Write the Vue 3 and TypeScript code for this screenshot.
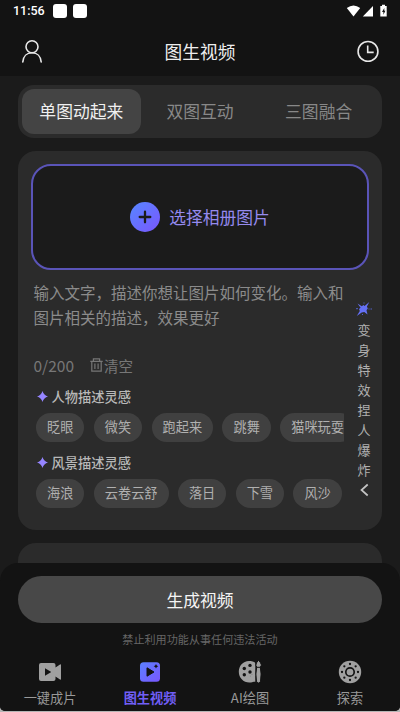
<script setup lang="ts">
import { ref } from 'vue'

const tabs: string[] = ['单图动起来', '双图互动', '三图融合']
const activeTab = ref(0)

interface Group {
  title: string
  chips: string[]
}

const groups: Group[] = [
  { title: '人物描述灵感', chips: ['眨眼', '微笑', '跑起来', '跳舞', '猫咪玩耍'] },
  { title: '风景描述灵感', chips: ['海浪', '云卷云舒', '落日', '下雪', '风沙'] },
]

const effects: string[] = [...'变身特效捏人爆炸']
const navItems: string[] = ['一键成片', '图生视频', 'AI绘图', '探索']
const activeNav = ref(1)

const ring = (count: number, radius: number) =>
  Array.from({ length: count }, (_, i) => {
    const a = (i * 2 * Math.PI) / count
    return { x: 12 + radius * Math.cos(a), y: 12 + radius * Math.sin(a) }
  })
const reelHoles = ring(8, 8)
</script>

<template>
  <div class="screen">
    <div class="status">
      <span class="time">11:56</span>
      <i class="square"></i>
      <i class="square"></i>
      <svg class="signals" width="42" height="14" viewBox="0 0 42 14" fill="#fff">
        <path d="M.8 4Q7.500-1 14.200 4L7.500 12.500Z" />
        <path d="M27 2v10.500H16.800Z" />
        <path fill-rule="evenodd" d="M34.300 2h1.700V.8h3V2h1.700v10.500h-6.400ZM38.300 4l-2.300 4h1.400v2.800l2-4H38.300Z" />
      </svg>
    </div>

    <header class="header">
      <svg width="24" height="26" viewBox="0 0 24 26" fill="none" stroke="#e8e8e8" stroke-width="1.600" stroke-linecap="round">
        <circle cx="12" cy="8.800" r="6" />
        <path d="M2.800 24C3.200 18.200 7 14.800 12 14.800s8.800 3.400 9.200 9.200" />
      </svg>
      <h1>图生视频</h1>
      <svg width="24" height="26" viewBox="0 0 24 26" fill="none" stroke="#e8e8e8" stroke-width="1.600">
        <circle cx="12" cy="13.400" r="9.900" />
        <path d="M11.700 7.600v6.800h6" />
      </svg>
    </header>

    <main class="content">
      <div class="tabs">
        <button v-for="(t, i) in tabs" :key="t" class="tab" :class="{ active: i === activeTab }" @click="activeTab = i">{{ t }}</button>
      </div>

      <section class="card">
        <div class="upload">
          <svg width="30" height="30" viewBox="0 0 30 30">
            <defs>
              <linearGradient id="plusFill" x1="0" y1="0" x2="1" y2="1">
                <stop offset="0" stop-color="#5687ff" />
                <stop offset="1" stop-color="#7a56ff" />
              </linearGradient>
            </defs>
            <circle cx="15" cy="15" r="15" fill="url(#plusFill)" />
            <path d="M15 9.700v10.600M9.700 15h10.600" stroke="#1b1b1b" stroke-width="2.300" stroke-linecap="round" />
          </svg>
          <span>选择相册图片</span>
        </div>

        <div class="body">
          <div class="main">
            <p class="prompt">输入文字，描述你想让图片如何变化。输入和图片相关的描述，效果更好</p>
            <div class="tools">
              <span class="count">0/200</span>
              <svg width="13" height="14" viewBox="0 0 13 14" fill="none" stroke="#777" stroke-width="1.200">
                <path d="M.3 3.300h12.400M3.400 3V.8h6.200V3M1.800 3.500v9.700h9.400V3.500M4.900 5.500v5.500M8.100 5.500v5.500" />
              </svg>
              <span class="clear">清空</span>
            </div>
            <div v-for="g in groups" :key="g.title" class="group">
              <div class="label">
                <svg width="11" height="11" viewBox="0 0 10 10" fill="#9585ff">
                  <path d="M5 0Q6.200 3.800 10 5 6.200 6.200 5 10 3.800 6.200 0 5 3.800 3.800 5 0Z" />
                </svg>
                <span>{{ g.title }}</span>
              </div>
              <div class="chips">
                <span v-for="c in g.chips" :key="c" class="chip">{{ c }}</span>
              </div>
            </div>
          </div>

          <aside class="side">
            <svg class="burst" width="16" height="14" viewBox="0 0 16 14">
              <path fill="#6470f5" d="M1.500 1.500 5.800 4.200 7.400 3l1.200 1L13.300 0 10.900 4.600l.9 1.800-1.300 1.800 1 4.300-3.200-2.600-2.600.5L.8 14l3-5.100L3 7l1.600-1.300Z" />
              <path d="M0 6.700h2M12.500 7h1M14.500 7H16M8 .5v1M6.500 12v1" stroke="#5361c8" />
            </svg>
            <span v-for="e in effects" :key="e">{{ e }}</span>
            <svg class="chevron" width="9" height="14" viewBox="0 0 9 14" fill="none" stroke="#c4c4c4" stroke-width="1.700">
              <path d="M7.700 1.500 1.500 7l6.200 5.500" />
            </svg>
          </aside>
        </div>
      </section>

      <section class="next-card"></section>
    </main>

    <footer class="footer">
      <button class="generate">生成视频</button>
      <p class="notice">禁止利用功能从事任何违法活动</p>
      <nav class="nav">
        <a v-for="(n, i) in navItems" :key="n" :class="{ active: i === activeNav }" @click="activeNav = i">
          <svg v-if="i === 0" width="24" height="24" viewBox="0 0 24 24" fill="#a0a0a0">
            <path fill-rule="evenodd" d="M3 3h12.500Q17.500 3 17.500 5v2.500L22 4.500q1-.5 1 .5v14q0 1-1 .5l-4.500-3V19q0 2-2 2H3Q1 21 1 19V5Q1 3 3 3ZM7 8.300v7.400l6.300-3.700Z" />
          </svg>
          <svg v-else-if="i === 1" width="24" height="24" viewBox="0 0 24 24">
            <defs>
              <linearGradient id="navFill" x1="0" y1="0" x2="1" y2="1">
                <stop offset="0" stop-color="#5b80ff" />
                <stop offset="1" stop-color="#7957ff" />
              </linearGradient>
            </defs>
            <rect x="2" y="2.300" width="20" height="19.500" rx="3.500" fill="url(#navFill)" />
            <path fill="#131313" stroke="#131313" stroke-linejoin="round" d="M9 7.800v8.400l7-4.200Z" />
            <path fill="#131313" d="M18 4q.5 1.800 2.300 2.300Q18.500 6.800 18 8.600 17.500 6.800 15.700 6.300 17.500 5.800 18 4Z" />
          </svg>
          <svg v-else-if="i === 2" width="24" height="24" viewBox="0 0 24 24">
            <path fill="#a0a0a0" d="M17 2.500C7.800-2.100.8 4.200.8 11.800c0 6.700 6 12.300 13.500 10.400 3-.8.8-3.200-1.300-5.100-1.200-1.200-.3-2.500 1.300-2.300l3 1V4Z" />
            <path fill="#a0a0a0" d="M12 14.500h5.300v7.300H13Z" />
            <g fill="#131313">
              <circle cx="12" cy="5.400" r="1.700" />
              <circle cx="6.300" cy="8.500" r="1.700" />
              <circle cx="6.300" cy="14.700" r="1.700" />
              <circle cx="12" cy="12" r="1.700" />
            </g>
            <path fill="#a0a0a0" stroke="#131313" stroke-width="1" d="M20.500.2q4.500 4.800 1.800 6.800l.8 7-.6 7.800q-2 2.500-4 0L17.900 14l.8-7Q16.500 4.500 20.500.2Z" />
            <path d="M18.500 7.300h4" stroke="#131313" />
          </svg>
          <svg v-else width="24" height="24" viewBox="0 0 24 24">
            <circle cx="12" cy="12" r="11.200" fill="#a0a0a0" />
            <circle cx="12" cy="12" r="4.200" fill="none" stroke="#131313" stroke-width="1.700" />
            <circle v-for="(h, k) in reelHoles" :key="k" :cx="h.x" :cy="h.y" r="1.150" fill="#131313" />
          </svg>
          <span>{{ n }}</span>
        </a>
      </nav>
    </footer>
  </div>
</template>

<style>
body {
  background: #b5b5b5;
}
</style>

<style scoped>
.screen {
  display: flex;
  flex-direction: column;
  box-sizing: border-box;
  width: 400px;
  height: 711px;
  overflow: hidden;
  border-radius: 0 0 5px 5px;
  background: #1b1b1b;
  color: #aaa;
  font-family: "Noto Sans CJK SC", sans-serif;
}
svg {
  display: block;
  flex: none;
}
button {
  border: 0;
  padding: 0;
  background: none;
  color: inherit;
  font-family: inherit;
}
p,
h1 {
  margin: 0;
}
.status {
  display: flex;
  flex: none;
  align-items: center;
  height: 22px;
  padding: 0 12px 0 13px;
  background: #131313;
}
.time {
  width: 40px;
  color: #fff;
  font: 500 12.500px/22px Roboto, sans-serif;
}
.square {
  width: 14px;
  height: 14px;
  margin-right: 5.500px;
  border-radius: 3px;
  background: #fff;
}
.signals {
  margin-left: auto;
}
.header {
  display: flex;
  flex: none;
  align-items: center;
  justify-content: space-between;
  height: 54px;
  box-sizing: border-box;
  padding: 4px 20px 0;
  background: #131313;
}
.header h1 {
  color: #eee;
  font-size: 17.700px;
  font-weight: 400;
  line-height: 26px;
}
.content {
  display: flex;
  flex: 1;
  flex-direction: column;
  min-height: 0;
  padding: 8.500px 18px 0;
}
.tabs {
  display: grid;
  flex: none;
  grid-template-columns: repeat(3, 1fr);
  box-sizing: border-box;
  height: 53.500px;
  padding: 4.500px 4px;
  border-radius: 16px;
  background: #2b2b2b;
}
.tab {
  border-radius: 12px;
  color: #888;
  font-size: 16.800px;
}
.tab.active {
  background: #444;
  color: #f0f0f0;
}
.card {
  flex: none;
  box-sizing: border-box;
  height: 379px;
  margin-top: 13px;
  padding: 13px 13px 0;
  border-radius: 18px;
  background: #2b2b2b;
}
.upload {
  display: flex;
  align-items: center;
  justify-content: center;
  gap: 9px;
  box-sizing: border-box;
  height: 106px;
  border: 2px solid #5a54b8;
  border-radius: 20px;
  background: #1b1b1b;
  color: #958aef;
  font-size: 16.800px;
}
.body {
  display: flex;
  justify-content: space-between;
}
.main {
  width: 313px;
  min-width: 0;
}
.prompt {
  width: 311px;
  padding: 10px 0 0 2.500px;
  color: #8b8b8b;
  font-size: 15.500px;
  line-height: 25.400px;
}
.tools {
  display: flex;
  align-items: center;
  height: 24px;
  margin-top: 22.500px;
  padding-left: 2.500px;
  color: #777;
}
.count {
  width: 56px;
  font-size: 15.500px;
}
.clear {
  margin-left: 1.500px;
  font-size: 14.500px;
}
.group {
  height: 66px;
  padding: 8px 0 0 5px;
  box-sizing: border-box;
}
.group:nth-child(3) {
  margin-top: 1px;
}
.label {
  display: flex;
  align-items: center;
  gap: 4px;
  height: 20px;
  padding-left: .500px;
  color: #b8b8b8;
  font-size: 13.250px;
  font-weight: 500;
}
.chips {
  display: flex;
  gap: 9.400px;
  margin-top: 7px;
  overflow: hidden;
}
.chip {
  flex: none;
  height: 29px;
  padding: 0 11px;
  border-radius: 15px;
  background: #404040;
  color: #b0b0b0;
  font-size: 13.200px;
  line-height: 28px;
}
.side {
  display: flex;
  flex-direction: column;
  align-items: center;
  width: 20px;
  margin-right: -5px;
  padding-top: 32px;
  color: #b0b0b0;
  font-size: 13px;
  line-height: 20px;
}
.burst {
  margin-bottom: 4px;
}
.chevron {
  margin-top: 3px;
}
.next-card {
  flex: none;
  height: 60px;
  margin-top: 13px;
  border-radius: 18px;
  background: #2b2b2b;
}
.footer {
  display: flex;
  position: relative;
  flex: none;
  flex-direction: column;
  align-items: center;
  box-sizing: border-box;
  height: 148.500px;
  padding-top: 13.500px;
  border-radius: 18px 18px 0 0;
  background: #131313;
}
.generate {
  width: 364px;
  height: 47px;
  border-radius: 24px;
  background: #484848;
  color: #f5f5f5;
  font-size: 16.800px;
}
.notice {
  margin-top: 8px;
  color: #666;
  font-size: 11.100px;
  line-height: 17px;
}
.nav {
  display: grid;
  grid-template-columns: repeat(4, 1fr);
  width: 100%;
  margin-top: 12px;
}
.nav a {
  display: flex;
  flex-direction: column;
  align-items: center;
  gap: 4px;
  color: #999;
  font-size: 13.200px;
  line-height: 20px;
}
.nav a.active {
  color: #705ef5;
  font-weight: 700;
}
</style>
